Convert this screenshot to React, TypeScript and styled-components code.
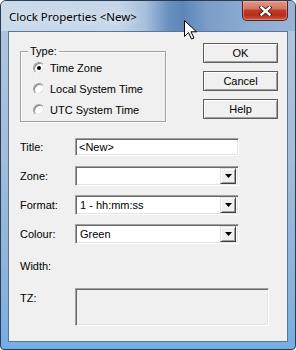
import styled, { createGlobalStyle, css } from 'styled-components';

const GlobalStyle = createGlobalStyle`
  html, body {
    margin: 0;
    padding: 0;
    background: #fff;
  }
  body {
    font-family: "Liberation Sans", Arial, sans-serif;
    font-size: 11px;
    color: #000;
  }
`;

const Window = styled.div`
  position: relative;
  width: 296px;
  height: 350px;
  box-sizing: border-box;
  border: 1px solid #2a3b52;
  border-radius: 6px 6px 4px 4px;
  display: flex;
  flex-direction: column;
  overflow: hidden;
  background: linear-gradient(to bottom, #b3c7de 0%, #a2bcd9 45%, #86b2de 85%, #74aee4 100%);
`;

const TitleBar = styled.div`
  height: 30px;
  display: flex;
  align-items: flex-start;
  padding-left: 8px;
  background: linear-gradient(
    to right,
    #cbdaeb 0%,
    #c6d6ea 40%,
    #a8c0dc 49%,
    #6890bf 57%,
    #5d86b8 62%,
    #7a9dc7 70%,
    #8eadd3 85%,
    #97b4d7 100%
  );
`;

const Caption = styled.span`
  margin-top: 8px;
  font-family: "Noto Sans", "Open Sans", sans-serif;
  font-size: 11.5px;
  line-height: 16px;
  color: #000;
  text-shadow: 0 0 8px rgba(255, 255, 255, 0.9);
`;

const CloseButton = styled.div`
  margin-left: auto;
  margin-right: 7px;
  width: 46px;
  height: 20px;
  box-sizing: border-box;
  border: 1px solid #5a1c14;
  border-top: none;
  border-radius: 0 0 5px 5px;
  display: flex;
  align-items: center;
  justify-content: center;
  background: linear-gradient(
    to bottom,
    #e09a8b 0%,
    #d27565 40%,
    #c03a25 50%,
    #b52f1c 75%,
    #cf5a40 100%
  );
  box-shadow: inset 0 0 0 1px rgba(255, 200, 190, 0.4);
`;

const Client = styled.div`
  flex: 1;
  margin: 0 7px 7px 7px;
  box-sizing: border-box;
  border: 1px solid #5b7592;
  background: #f0f0f0;
  padding: 11px 9px 0 11px;
  display: flex;
  flex-direction: column;
`;

const TopRow = styled.div`
  display: flex;
  justify-content: space-between;
  align-items: flex-start;
`;

const GroupBox = styled.div`
  position: relative;
  margin-top: 8px;
  width: 146px;
  height: 71px;
  box-sizing: border-box;
  border: 1px solid #a0a0a0;
  box-shadow: 1px 1px 0 #fff, inset 1px 1px 0 #fff;
  padding: 5px 0 0 12px;
  display: flex;
  flex-direction: column;
`;

const Legend = styled.span`
  position: absolute;
  top: -7px;
  left: 7px;
  padding: 0 2px;
  line-height: 13px;
  background: #f0f0f0;
`;

const RadioRow = styled.label`
  height: 21px;
  display: flex;
  align-items: center;
  gap: 5px;
`;

const RadioCircle = styled.span<{ $checked?: boolean }>`
  position: relative;
  width: 12px;
  height: 12px;
  box-sizing: border-box;
  border-radius: 50%;
  background: #fff;
  border: 1px solid;
  border-color: #a0a0a0 #f4f4f4 #f4f4f4 #a0a0a0;
  box-shadow: inset 1px 1px 0 #8a8a8a, inset -1px -1px 0 #e0e0e0;
  &::after {
    content: '';
    display: ${(p) => (p.$checked ? 'block' : 'none')};
    position: absolute;
    left: 3px;
    top: 3px;
    width: 4px;
    height: 4px;
    border-radius: 50%;
    background: #000;
  }
`;

const ButtonColumn = styled.div`
  display: flex;
  flex-direction: column;
  gap: 8px;
`;

const PushButton = styled.button`
  width: 75px;
  height: 20px;
  box-sizing: border-box;
  margin: 0;
  padding: 0;
  font-family: "Liberation Sans", Arial, sans-serif;
  font-size: 11px;
  color: #000;
  background: #f0f0f0;
  border: 1px solid #5e5e5e;
  box-shadow: inset 1px 1px 0 #fff, inset -1px -1px 0 #a0a0a0;
`;

const Form = styled.div`
  margin-top: 15px;
  display: flex;
  flex-direction: column;
`;

const FieldRow = styled.div<{ $top?: number; $align?: string }>`
  display: flex;
  align-items: ${(p) => p.$align || 'center'};
  margin-top: ${(p) => p.$top || 0}px;
  min-height: 20px;
`;

const Label = styled.span<{ $pad?: number }>`
  width: 55px;
  line-height: 13px;
  padding-top: ${(p) => p.$pad || 0}px;
`;

const sunken = css`
  box-sizing: border-box;
  border: 1px solid;
  border-color: #a0a0a0 #fff #fff #a0a0a0;
  box-shadow: inset 1px 1px 0 #696969, inset -1px -1px 0 #e3e3e3;
`;

const TextBox = styled.input`
  ${sunken};
  width: 164px;
  height: 18px;
  margin: 0;
  padding: 0 2px 0 3px;
  font-family: "Liberation Sans", Arial, sans-serif;
  font-size: 11px;
  color: #000;
  background: #fff;
  outline: none;
`;

const Combo = styled.div`
  ${sunken};
  width: 164px;
  height: 20px;
  padding: 2px;
  display: flex;
  align-items: center;
  background: #fff;
`;

const ComboText = styled.span`
  flex: 1;
  padding-left: 2px;
  line-height: 13px;
`;

const DropButton = styled.span`
  width: 16px;
  height: 16px;
  box-sizing: border-box;
  background: #f0f0f0;
  border: 1px solid;
  border-color: #e3e3e3 #404040 #404040 #e3e3e3;
  box-shadow: inset 1px 1px 0 #fff, inset -1px -1px 0 #a0a0a0;
  display: flex;
  align-items: center;
  justify-content: center;
`;

const DisplayBox = styled.div`
  ${sunken};
  width: 194px;
  height: 38px;
  background: #f0f0f0;
`;

const Cursor = styled.svg`
  position: absolute;
  left: 183px;
  top: 19px;
`;

const Arrow = () => (
  <svg width="7" height="4" viewBox="0 0 7 4">
    <path d="M0 0h7L3.5 4z" fill="#000" />
  </svg>
);

const ComboBox = ({ value }: { value?: string }) => (
  <Combo>
    <ComboText>{value}</ComboText>
    <DropButton>
      <Arrow />
    </DropButton>
  </Combo>
);

const App = () => {
  return (
    <>
      <GlobalStyle />
      <Window>
        <TitleBar>
          <Caption>Clock Properties &lt;New&gt;</Caption>
          <CloseButton>
            <svg width="13" height="10" viewBox="0 0 13 10">
              <path d="M2.5 1.5l8 7M10.5 1.5l-8 7" stroke="#3a1810" strokeWidth="4" strokeLinecap="square" />
              <path d="M2.5 1.5l8 7M10.5 1.5l-8 7" stroke="#fff" strokeWidth="2.4" strokeLinecap="square" />
            </svg>
          </CloseButton>
        </TitleBar>
        <Client>
          <TopRow>
            <GroupBox>
              <Legend>Type:</Legend>
              <RadioRow>
                <RadioCircle $checked />
                Time Zone
              </RadioRow>
              <RadioRow>
                <RadioCircle />
                Local System Time
              </RadioRow>
              <RadioRow>
                <RadioCircle />
                UTC System Time
              </RadioRow>
            </GroupBox>
            <ButtonColumn>
              <PushButton type="button">OK</PushButton>
              <PushButton type="button">Cancel</PushButton>
              <PushButton type="button">Help</PushButton>
            </ButtonColumn>
          </TopRow>
          <Form>
            <FieldRow>
              <Label>Title:</Label>
              <TextBox defaultValue="<New>" />
            </FieldRow>
            <FieldRow $top={9}>
              <Label>Zone:</Label>
              <ComboBox />
            </FieldRow>
            <FieldRow $top={9}>
              <Label>Format:</Label>
              <ComboBox value="1 - hh:mm:ss" />
            </FieldRow>
            <FieldRow $top={9}>
              <Label>Colour:</Label>
              <ComboBox value="Green" />
            </FieldRow>
            <FieldRow $top={12}>
              <Label>Width:</Label>
            </FieldRow>
            <FieldRow $top={12} $align="flex-start">
              <Label $pad={4}>TZ:</Label>
              <DisplayBox />
            </FieldRow>
          </Form>
        </Client>
        <Cursor width="13" height="20" viewBox="0 0 13 20">
          <path d="M0.5 0.5v16l4-4 3 6.5 2.5-1-3-6.2h5.5z" fill="#fff" stroke="#000" strokeWidth="1" strokeLinejoin="round" />
        </Cursor>
      </Window>
    </>
  );
};

export default App;
